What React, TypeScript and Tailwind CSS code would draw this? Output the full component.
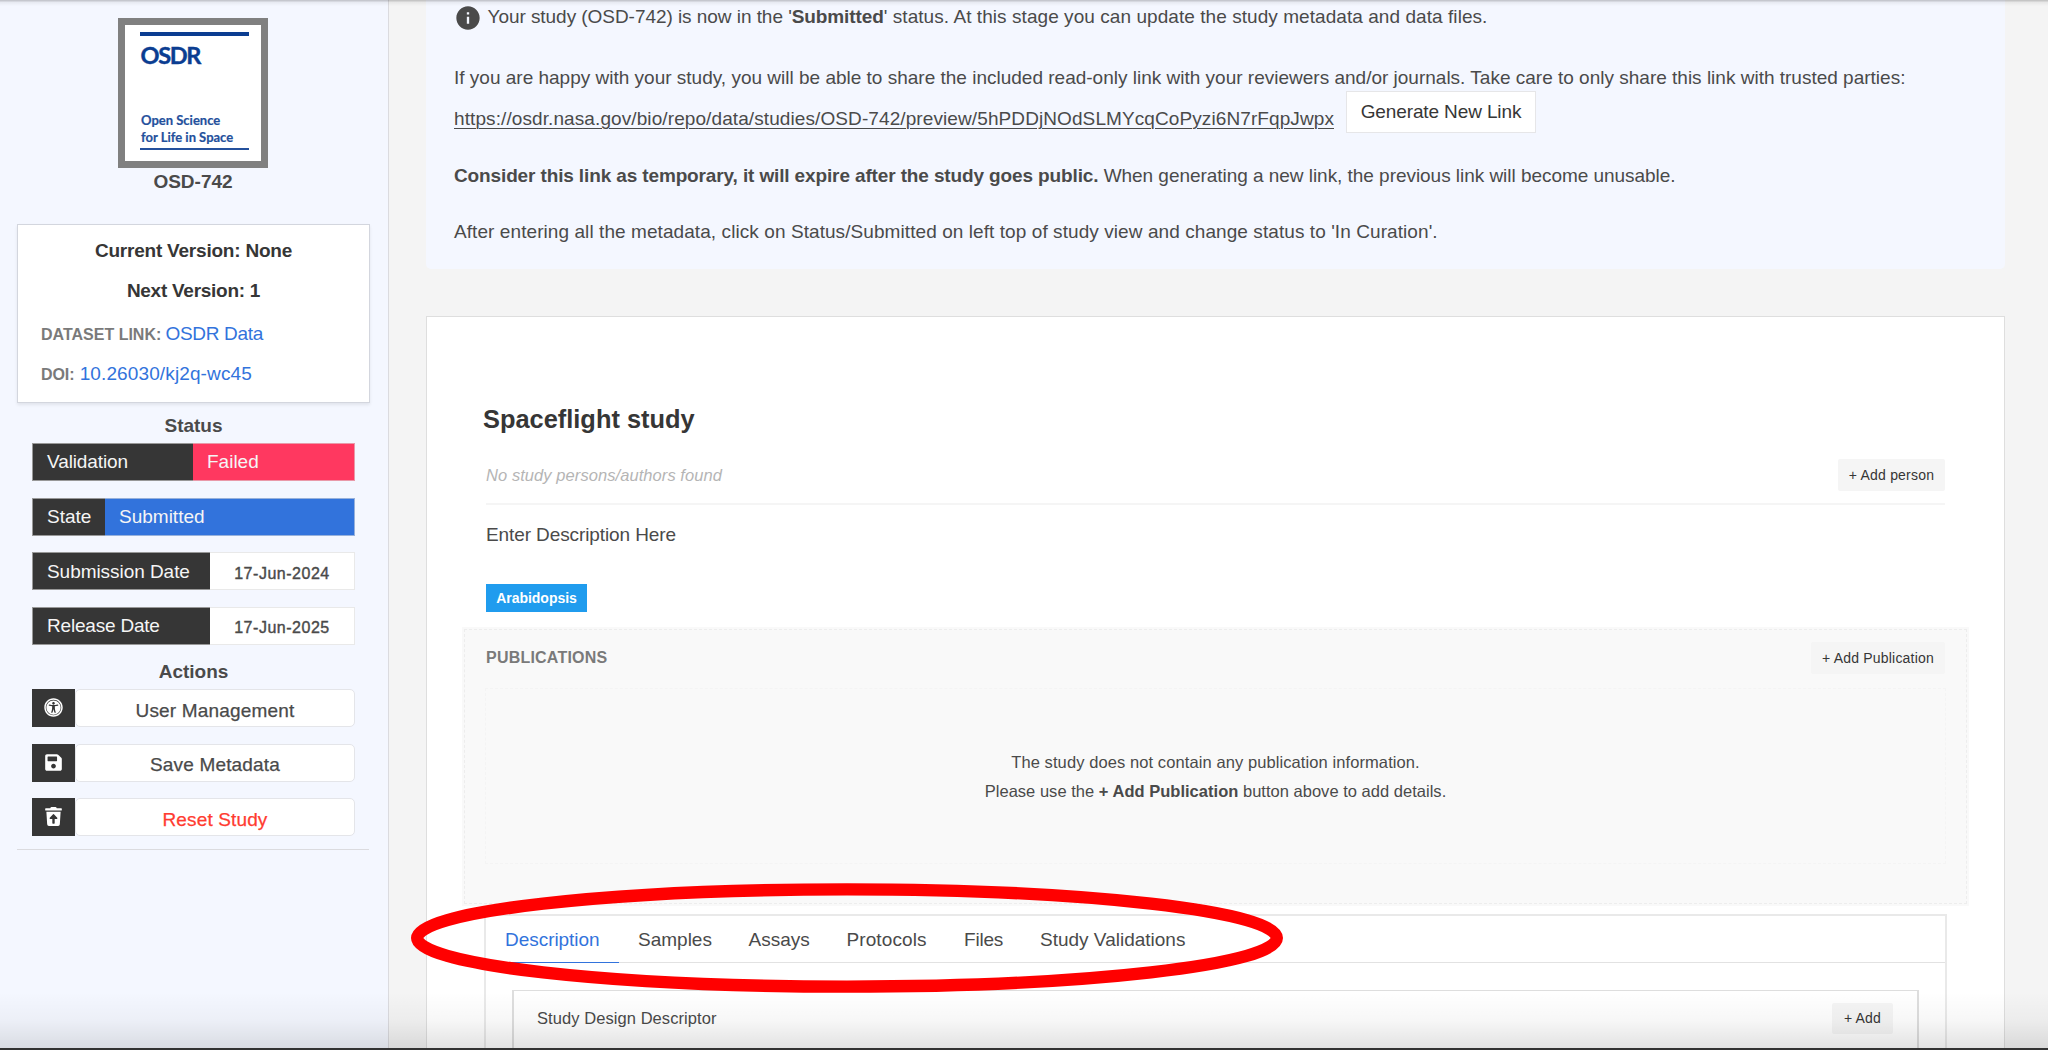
import React from "react";
import { FaSave, FaTrashRestore, FaUniversalAccess } from "react-icons/fa";
import { MdInfo } from "react-icons/md";

function Logo() {
  return (
    <div className="mx-auto flex h-[150px] w-[150px] flex-col border-[7px] border-[#808080] bg-white pl-[14.5px] pr-[12px] font-['Lato'] font-bold text-[#0b3d91]">
      <div className="mt-[7px] h-[4px] w-[109.5px] shrink-0 bg-[#0b3d91]" />
      <div className="mt-[4px] h-[30px] pl-[1px] text-[23.5px] leading-[30px] tracking-[-1.3px] [-webkit-text-stroke:0.4px_currentColor]">OSDR</div>
      <div className="mt-[42px] whitespace-nowrap pl-[1.5px] text-[13px] leading-[17.4px] text-[#24509c] [-webkit-text-stroke:0.2px_currentColor]">
        <div>Open Science</div>
        <div>for Life in Space</div>
      </div>
      <div className="mt-[2px] h-[2px] w-[109.5px] shrink-0 bg-[#24509c]" />
    </div>
  );
}

function StatusRow({ label, labelClass, children, valueClass }: { label: string; labelClass: string; children: React.ReactNode; valueClass: string }) {
  return (
    <div className="flex h-[38px]">
      <div className={"flex shrink-0 items-center border-y border-l border-[#dbdbdb]/60 bg-[#363636] pl-[14px] pt-px text-[#f5f5f5] " + labelClass}>{label}</div>
      <div className={"flex flex-1 items-center border-y border-r border-[#dbdbdb]/60 " + valueClass}>{children}</div>
    </div>
  );
}

function ActionRow({ icon, label, labelClass }: { icon: React.ReactNode; label: string; labelClass: string }) {
  return (
    <div className="flex h-[38px]">
      <div className="flex w-[43px] items-center justify-center bg-[#363636] pb-[2px] text-[19px] text-white">{icon}</div>
      <button className={"flex-1 rounded-[5px] border border-[#e4e5e9] bg-white pt-[5px] font-medium leading-[30px] [-webkit-text-stroke:0.25px_currentColor] " + labelClass}>{label}</button>
    </div>
  );
}

function Sidebar() {
  return (
    <aside className="flex w-[389px] shrink-0 flex-col border-r border-[#dbdbdf] bg-[#f4f7ff] pt-[17.5px]">
      <div className="w-[386px]">
        <Logo />
        <div className="h-[28px] text-center font-bold leading-[28px]">OSD-742</div>
      </div>
      <div className="ml-[17px] mt-[28.5px] h-[179px] w-[353px] border border-[#d3d6de] bg-white pt-[6px] leading-[40px] shadow-[0_2px_3px_rgba(10,10,10,0.08)]">
        <div className="text-center font-bold tracking-[-0.22px] text-[#363636]">Current Version: None</div>
        <div className="text-center font-bold tracking-[-0.27px] text-[#363636]">Next Version: 1</div>
        <div className="mt-[3px] pl-[23px]">
          <b className="text-[16px] text-[#7a7a7a]">DATASET LINK:</b>{" "}
          <a className="-ml-[1px] tracking-[-0.33px] text-[#3273dc]">OSDR Data</a>
        </div>
        <div className="-mt-px pl-[23px]">
          <b className="text-[16px] tracking-[-0.1px] text-[#7a7a7a]">DOI:</b>{" "}
          <a className="tracking-[0.12px] text-[#3273dc]">10.26030/kj2q-wc45</a>
        </div>
      </div>
      <div className="ml-[32px] w-[323px]">
        <h2 className="h-[40px] pt-[5px] text-center font-bold leading-[36px]">Status</h2>
        <div className="flex h-[202px] flex-col justify-between">
          <StatusRow label="Validation" labelClass="w-[161px] tracking-[-0.1px]" valueClass="bg-[#ff3860] pl-[14px] pt-px text-[#f5f5f5]">Failed</StatusRow>
          <StatusRow label="State" labelClass="w-[73px]" valueClass="bg-[#3273dc] pl-[14px] pt-px text-[#f5f5f5]">Submitted</StatusRow>
          <StatusRow label="Submission Date" labelClass="w-[178px] tracking-[-0.05px]" valueClass="justify-center bg-white pt-[5px] text-[16px] font-medium tracking-[0.52px] [-webkit-text-stroke:0.4px_currentColor]">17-Jun-2024</StatusRow>
          <StatusRow label="Release Date" labelClass="w-[178px] tracking-[-0.2px]" valueClass="justify-center bg-white pt-[5px] text-[16px] font-medium tracking-[0.52px] [-webkit-text-stroke:0.4px_currentColor]">17-Jun-2025</StatusRow>
        </div>
        <h2 className="h-[44px] pt-[9px] text-center font-bold leading-[36px]">Actions</h2>
        <div className="flex h-[147px] flex-col justify-between">
          <ActionRow icon={<FaUniversalAccess />} label="User Management" labelClass="tracking-[0.18px]" />
          <ActionRow icon={<FaSave className="mt-[2px]" />} label="Save Metadata" labelClass="tracking-[0.18px]" />
          <ActionRow icon={<FaTrashRestore />} label="Reset Study" labelClass="tracking-[0.14px] text-[#ff3b30]" />
        </div>
      </div>
      <hr className="ml-[17px] mt-[13px] w-[352px] border-[#dbdbdf]" />
    </aside>
  );
}

function Notice() {
  return (
    <section className="h-[269px] rounded-b-[5px] bg-[#f4f7ff] pl-[28px]">
      <div className="flex h-[35px] items-center">
        <MdInfo className="mr-[5.5px] h-[28px] w-[28px]" />
        <p>
          <span className="tracking-[-0.05px]">Your study (OSD-742) is now in the '</span>
          <b className="tracking-[-0.1px]">Submitted</b>
          <span className="tracking-[0.06px]">' status. At this stage you can update the study metadata and data files.</span>
        </p>
      </div>
      <p className="mt-[25px] leading-[35px]">
        If you are happy with your study, you will be able to share the included read-only link with your reviewers and/or journals. Take care to only share this link with trusted parties:
      </p>
      <div className="-mt-[4px] flex h-[42px]">
        <a className="mr-[12px] w-[880px] whitespace-nowrap pt-[9px] leading-[38px] tracking-[0.095px] underline decoration-1 underline-offset-[3px]">
          https://osdr.nasa.gov/bio/repo/data/studies/OSD-742/preview/5hPDDjNOdSLMYcqCoPyzi6N7rFqpJwpx
        </a>
        <button className="w-[190px] border border-[#e6e6e8] bg-white tracking-[-0.12px] text-[#363636]">Generate New Link</button>
      </div>
      <p className="mt-[25px] leading-[36px]">
        <b className="tracking-[-0.13px]">Consider this link as temporary, it will expire after the study goes public.</b>{" "}
        <span className="tracking-[-0.04px]">When generating a new link, the previous link will become unusable.</span>
      </p>
      <p className="mt-[20px] leading-[36px] tracking-[0.075px]">
        After entering all the metadata, click on Status/Submitted on left top of study view and change status to 'In Curation'.
      </p>
    </section>
  );
}

function SmallButton({ label, className }: { label: string; className: string }) {
  return <button className={"shrink-0 rounded-[2px] bg-[#f5f5f5] text-[14px] tracking-[0.2px] text-[#363636] " + className}>{label}</button>;
}

function Publications() {
  return (
    <section className="-ml-[24px] mt-[15px] h-[279px] w-[1507px] bg-[#f9f9f9] p-[2px]">
      <div className="h-full border border-dashed border-[#ededed] px-[20px] pt-[12px]">
        <div className="flex h-[32px] items-center justify-between pl-[1px] pr-[1px]">
          <h3 className="text-[16px] font-bold tracking-[0.22px] text-[#7a7a7a]">PUBLICATIONS</h3>
          <SmallButton label="+ Add Publication" className="h-[32px] w-[134px]" />
        </div>
        <div className="mt-[14px] flex h-[176px] flex-col items-center border border-dashed border-[#f4f4f4] pt-[59px] text-[16.5px] leading-[28.5px]">
          <p className="tracking-[0.09px]">The study does not contain any publication information.</p>
          <p className="tracking-[0.02px]">
            Please use the <b>+ Add Publication</b> button above to add details.
          </p>
        </div>
      </div>
    </section>
  );
}

const tabs = [
  { label: "Samples", width: "w-[110.5px]" },
  { label: "Assays", width: "w-[98px]" },
  { label: "Protocols", width: "w-[117.5px] tracking-[0.1px]" },
  { label: "Files", width: "w-[76px] tracking-[-0.2px]" },
  { label: "Study Validations", width: "w-[183px]" },
];

function StudyTabs() {
  return (
    <section className="-ml-[2px] mt-[8px] h-[135px] w-[1463px] border-2 border-b-0 border-[#e9e9e9]">
      <nav className="flex h-[47px] border-b border-[#e2e2e2]">
        <span className="-mb-px w-[133px] border-b border-[#3273dc] pl-[19px] leading-[48px] tracking-[-0.04px] text-[#3273dc]">Description</span>
        {tabs.map((tab) => (
          <span key={tab.label} className={"whitespace-nowrap pl-[19px] leading-[48px] " + tab.width}>{tab.label}</span>
        ))}
      </nav>
      <div className="ml-[26px] mt-[27px] flex h-[59px] w-[1407px] justify-between border-x-2 border-t border-[#dedede] pl-[23px] pr-[24px] pt-[12px]">
        <span className="text-[16.5px] leading-[31px] tracking-[0.07px]">Study Design Descriptor</span>
        <SmallButton label="+ Add" className="h-[31px] w-[61px]" />
      </div>
    </section>
  );
}

function StudyCard() {
  return (
    <section className="mt-[47px] h-[733px] overflow-hidden border border-b-0 border-[#dedede] bg-white pl-[59px]">
      <h1 className="-ml-[3px] mt-[82px] text-[25.4px] font-bold leading-[40px] text-[#363636]">Spaceflight study</h1>
      <div className="mt-[20px] flex h-[32px] w-[1459px] items-center justify-between">
        <i className="text-[16.5px] tracking-[0.07px] text-[#b5b5b5]">No study persons/authors found</i>
        <SmallButton label="+ Add person" className="h-[32px] w-[107px]" />
      </div>
      <hr className="mt-[12px] w-[1459px] border-t-2 border-[#f5f5f5]" />
      <p className="mt-[15px] leading-[30px] tracking-[-0.1px]">Enter Description Here</p>
      <div className="mt-[34px] h-[28px] w-[101px] bg-[#209cee] text-center text-[14px] font-bold leading-[28px] tracking-[-0.04px] text-white">Arabidopsis</div>
      <Publications />
      <StudyTabs />
    </section>
  );
}

export default function App() {
  return (
    <div className="relative h-[1053px] w-[2048px] overflow-hidden bg-white font-['Liberation_Sans',Arial,sans-serif] text-[19px] text-[#4a4a4a]">
      <div className="flex h-[1048px] bg-[#f4f4f4]">
        <Sidebar />
        <main className="ml-[37px] w-[1579px] overflow-hidden">
          <Notice />
          <StudyCard />
        </main>
      </div>
      <div className="h-[1.5px] bg-[#333]" />
      <div className="absolute inset-x-0 top-0 h-[6px] bg-[linear-gradient(to_bottom,rgba(0,0,0,0.2)_0,rgba(0,0,0,0.19)_1px,rgba(0,0,0,0.06)_2px,transparent_6px)]" />
      <div className="absolute inset-x-0 top-[992px] h-[56px] bg-[linear-gradient(to_bottom,transparent,rgba(0,0,0,0.03)_50%,rgba(0,0,0,0.11))]" />
      <svg className="absolute left-[405px] top-[878px]" width="884" height="120" viewBox="0 0 884 120" fill="none">
        <ellipse cx="442" cy="60" rx="429.8" ry="48.6" stroke="#ff0000" strokeWidth="12.4" />
      </svg>
    </div>
  );
}
